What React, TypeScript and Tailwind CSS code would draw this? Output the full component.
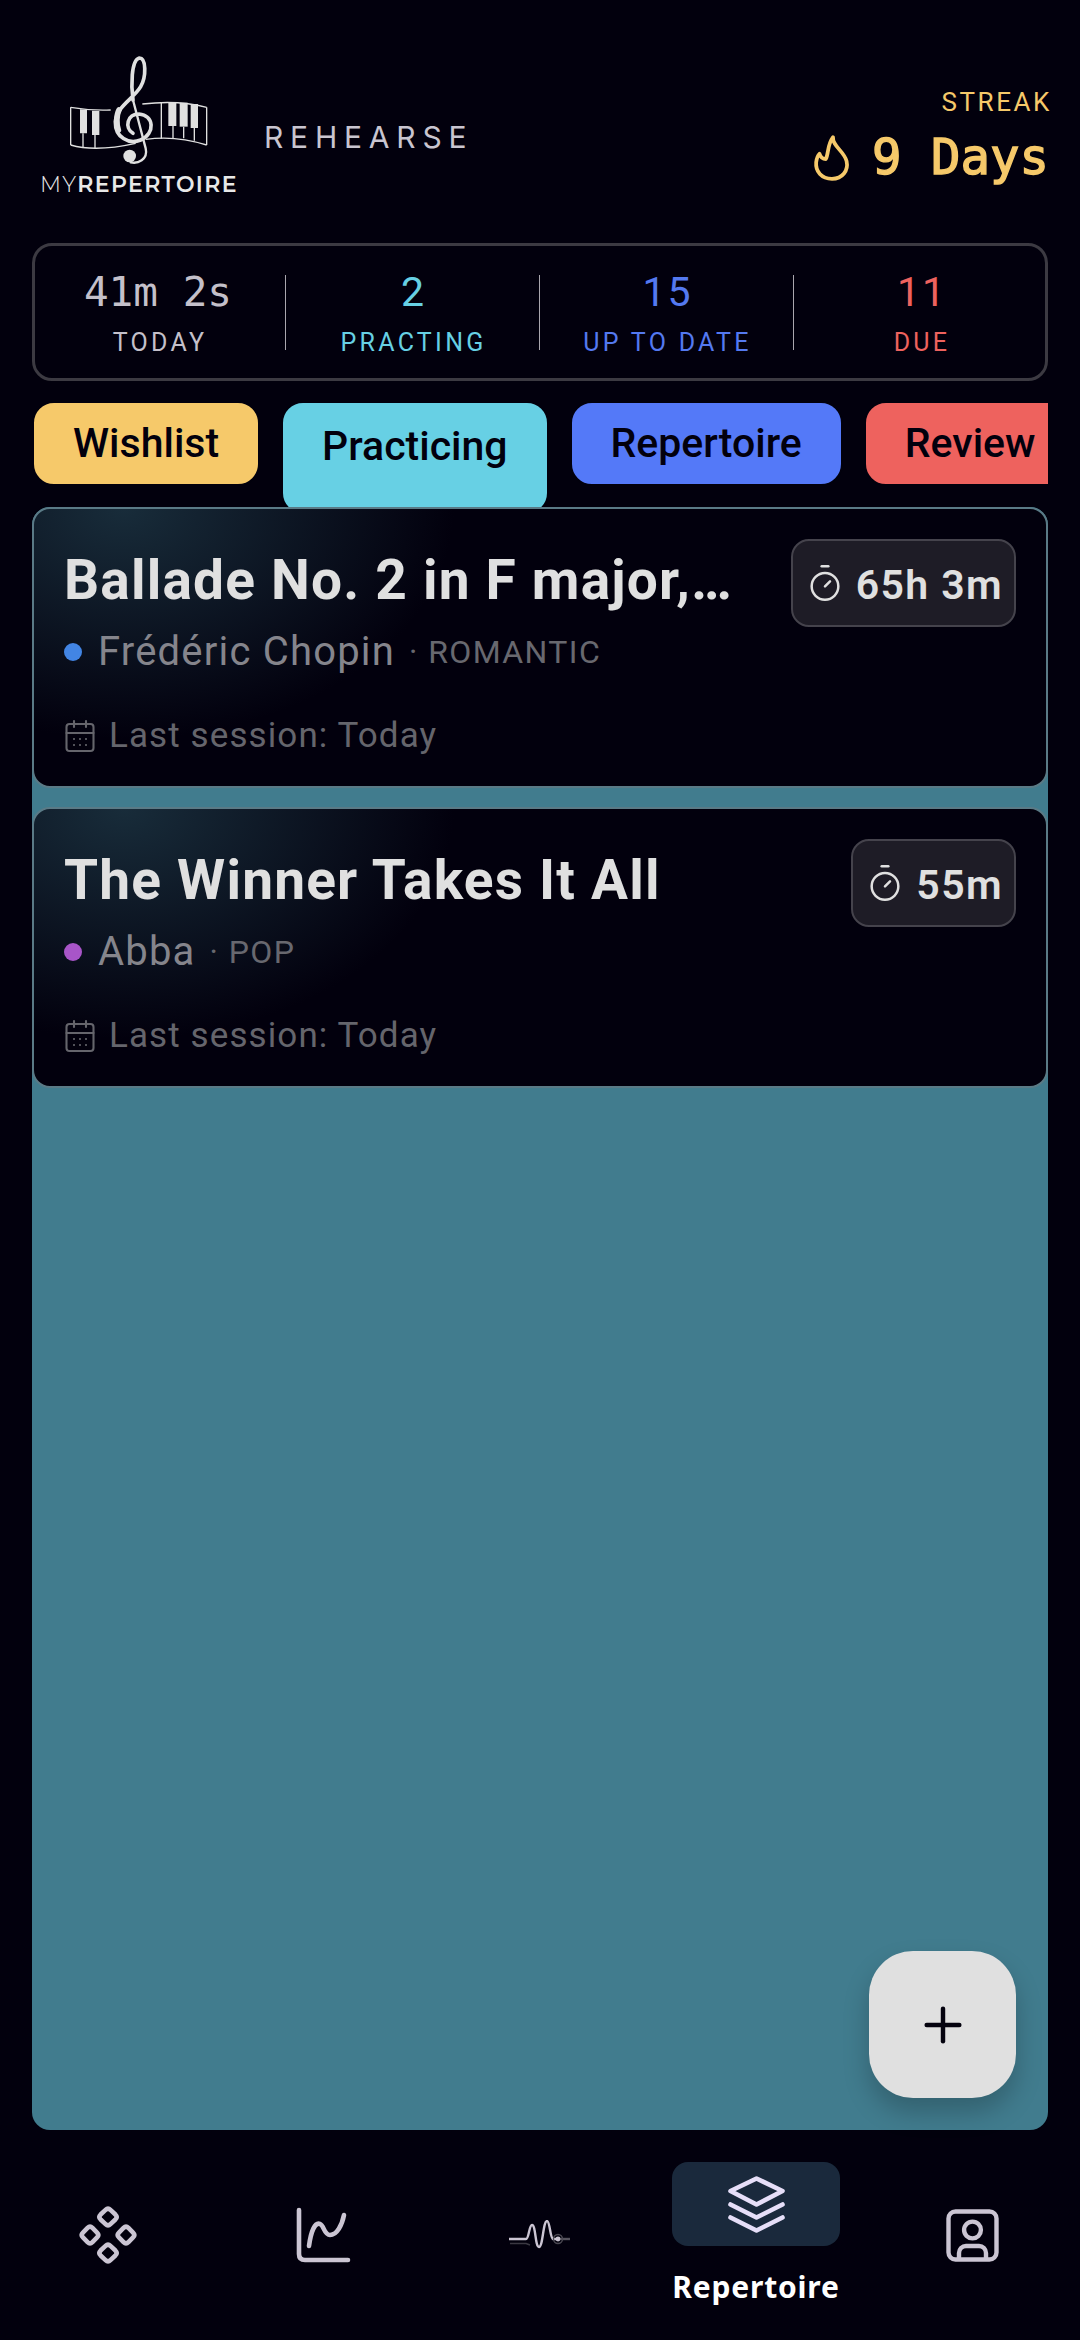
import { CalendarDays, Timer, Plus } from "lucide-react";

const roboto = "font-['Roboto',sans-serif]";

function Logo() {
  return (
    <div className="flex w-[200px] flex-col items-center">
      <svg viewBox="30 15 600 345" width={200} height={115} fill="none" stroke="#e0e0e0">
        <g strokeWidth={4}>
          <path d="M125 172 C160 178 200 182 245 180" />
          <path d="M125 172 V285" />
          <path d="M125 285 C170 298 230 300 320 280" />
          <path d="M340 162 C400 155 470 155 533 172" />
          <path d="M533 172 V285" />
          <path d="M350 268 C420 258 480 268 533 285" />
          <path d="M162 250 V292 M198 255 V296 M397 157 V266 M432 228 V264 M464 230 V265 M496 233 V272" />
        </g>
        <g fill="#e0e0e0" stroke="none">
          <path d="M153 178 L174 180 V250 H153 Z" />
          <path d="M189 182 L211 183 V255 H189 Z" />
          <path d="M418 157 H442 V228 H418 Z" />
          <path d="M452 158 H476 V230 H452 Z" />
          <path d="M485 162 H507 V234 H485 Z" />
        </g>
        <g strokeLinecap="round">
          <path d="M312 150 C306 110 306 30 331 24 C352 24 352 80 335 110 C315 145 262 170 259 215 C258 262 300 285 335 270 C380 250 375 195 330 192 C295 192 285 232 312 250" strokeWidth={11} fill="none" />
          <path d="M270 180 C262 195 262 225 268 240" strokeWidth={17} />
          <path d="M312 150 L350 295 C358 330 325 342 305 337" strokeWidth={7} />
          <circle cx="302" cy="318" r="19" fill="#e0e0e0" stroke="none" />
        </g>
      </svg>
      <div className="mt-[3px] font-['Montserrat','Inter',sans-serif] text-[22px] leading-[24px] tracking-[1.4px] whitespace-nowrap text-[#e8e8e8]">
        <span className="font-light">MY</span>
        <span className="font-semibold">REPERTOIRE</span>
      </div>
    </div>
  );
}

function Flame() {
  return (
    <svg viewBox="0 0 24 24" width={50} height={50} fill="none" stroke="#f6c96a" strokeWidth={1.8} strokeLinejoin="round">
      <path d="M12.5 2 C12 6 18 9 19 13.5 C20 18 17 22 12 22 C7 22 4 18.5 4.4 14 C4.6 12.5 5 11 6 10 C6.5 11.5 7.5 12.5 9 12.5 C10.5 10 9.5 6 12.5 2Z" />
    </svg>
  );
}

function Stat({ value, label, color, mono, width }: { value: string; label: string; color: string; mono?: boolean; width: string }) {
  return (
    <div className={`flex flex-col items-center pt-[2px] ${width}`}>
      <div className={`text-[41px] leading-[48px] ${color} ${mono ? "-ml-[4px] font-['DejaVu_Sans_Mono',monospace] font-normal" : `${roboto} font-normal tracking-[2px]`}`}>
        {value}
      </div>
      <div className={`mt-[12px] ${roboto} text-[25px] leading-[30px] tracking-[3.3px] ${color}`}>{label}</div>
    </div>
  );
}

function Tab({ label, bg, active }: { label: string; bg: string; active?: boolean }) {
  return (
    <div
      className={`flex shrink-0 justify-center rounded-[22px] border-2 border-[#02000d] px-[39px] ${bg} ${roboto} text-[41px] font-medium text-[#02000d] ${
        active ? "h-[114px] pt-[18px]" : "h-[85px] pt-[15px]"
      }`}
    >
      <span className="leading-[50px]">{label}</span>
    </div>
  );
}

function Card({ title, artist, dot, tag, time }: { title: string; artist: string; dot: string; tag: string; time: string }) {
  return (
    <div className="relative h-[281px] rounded-[18px] border-2 border-[#5a7a86] bg-[#02000d] bg-[radial-gradient(ellipse_330px_230px_at_90px_0px,#182c3a_0%,#02000d_100%)] px-[30px] pt-[41px]">
      <div className={`${roboto} text-[55px] leading-[60px] font-bold tracking-[1.2px] whitespace-nowrap text-[#e0e0e0]`}>{title}</div>
      <div className="mt-[16px] flex items-center">
        <div className={`h-[18px] w-[18px] rounded-full ${dot}`} />
        <span className={`ml-[16px] ${roboto} text-[40px] leading-[52px] tracking-[1.2px] text-[#85858c]`}>{artist}</span>
        <span className={`ml-[14px] ${roboto} text-[32px] tracking-[1.4px] text-[#68686f]`}>· {tag}</span>
      </div>
      <div className="mt-[36px] flex items-center">
        <CalendarDays size={36} strokeWidth={1.4} className="-ml-[2px] text-[#65656c]" />
        <span className={`ml-[11px] ${roboto} text-[35px] leading-[44px] tracking-[1.1px] text-[#65656c]`}>Last session: Today</span>
      </div>
      <div className="absolute top-[30px] right-[30px] flex h-[88px] items-center rounded-[18px] border-2 border-[#45434c] bg-[#1e1c26] pr-[11px] pl-[12px]">
        <Timer size={40} strokeWidth={1.5} className="text-[#e0e0e0]" />
        <span className={`mt-[5px] ml-[11px] ${roboto} text-[41px] font-semibold tracking-[1.4px] text-[#e0e0e0]`}>{time}</span>
      </div>
    </div>
  );
}

function NavCell({ children }: { children: React.ReactNode }) {
  return <div className="flex items-center justify-center">{children}</div>;
}

const iconStroke = "#cbc5d3";

export default function App() {
  return (
    <div className="flex h-[2340px] w-[1080px] flex-col overflow-hidden bg-[#02000d]">
      <header className="flex h-[243px] shrink-0 justify-between pt-[55px] pr-[31px] pl-[39px]">
        <div className="flex">
          <Logo />
          <div className="mt-[63px] ml-[25px] font-['Inter',sans-serif] text-[30px] leading-[38px] tracking-[6.8px] text-[#c9c5d0]">REHEARSE</div>
        </div>
        <div className="flex flex-col items-end pt-[32px]">
          <div className={`-mr-[3px] ${roboto} text-[26px] leading-[30px] tracking-[2.6px] text-[#f6c96a]`}>STREAK</div>
          <div className="mt-[11px] flex items-center">
            <Flame />
            <span className="ml-[15px] font-['DejaVu_Sans_Mono',monospace] text-[49px] leading-[60px] font-normal text-[#f6c96a] [-webkit-text-stroke:1.4px_#f6c96a]">9 Days</span>
          </div>
        </div>
      </header>

      <div className="mx-[32px] flex h-[138px] shrink-0 items-center rounded-[20px] border-[3px] border-[#3c3a42]">
        <Stat value="41m 2s" label="TODAY" color="text-[#c4c0ca]" mono width="w-[250px]" />
        <div className="h-[75px] w-px shrink-0 bg-[#a9a6ad]" />
        <Stat value="2" label="PRACTING" color="text-[#67d0e4]" width="w-[253px] pl-[2px]" />
        <div className="h-[75px] w-px shrink-0 bg-[#a9a6ad]" />
        <Stat value="15" label="UP TO DATE" color="text-[#5479f0]" width="w-[253px] pl-[2px]" />
        <div className="h-[75px] w-px shrink-0 bg-[#a9a6ad]" />
        <Stat value="11" label="DUE" color="text-[#ee625e]" width="flex-1 pl-[5px]" />
      </div>

      <div className="mx-[32px] mt-[20px] flex h-[106px] shrink-0 gap-[21px] overflow-hidden">
        <Tab label="Wishlist" bg="bg-[#f6c96a]" />
        <Tab label="Practicing" bg="bg-[#67d0e4]" active />
        <Tab label="Repertoire" bg="bg-[#5479f8]" />
        <Tab label="Review" bg="bg-[#ee625e]" />
      </div>

      <main className="relative mx-[32px] flex flex-1 flex-col gap-[19px] rounded-[18px] bg-[#417c8e]">
        <Card title="Ballade No. 2 in F major,…" artist="Frédéric Chopin" dot="bg-[#4285e4]" tag="ROMANTIC" time="65h 3m" />
        <Card title="The Winner Takes It All" artist="Abba" dot="bg-[#a855c8]" tag="POP" time="55m" />
        <div className="absolute right-[32px] bottom-[32px] flex h-[147px] w-[147px] items-center justify-center rounded-[44px] bg-[#e0e0e0] shadow-[0_14px_26px_rgba(0,0,0,0.22)]">
          <Plus size={56} strokeWidth={1.9} className="text-[#05030f]" />
        </div>
      </main>

      <nav className="grid h-[210px] shrink-0 grid-cols-5 items-center">
        <NavCell>
          <svg viewBox="0 0 170 170" width={60} height={60} fill="none" stroke={iconStroke} strokeWidth={13} strokeLinejoin="round">
            <path d="M78 14 Q85 7 92 14 L106 27 Q113 34 106 41 L92 54 Q85 61 78 54 L64 41 Q57 34 64 27 Z" />
            <path d="M27 65 Q34 58 41 65 L54 78 Q61 85 54 92 L41 105 Q34 112 27 105 L14 92 Q7 85 14 78 Z" />
            <path d="M129 65 Q136 58 143 65 L156 78 Q163 85 156 92 L143 105 Q136 112 129 105 L116 92 Q109 85 116 78 Z" />
            <path d="M78 116 Q85 109 92 116 L106 129 Q113 136 106 143 L92 156 Q85 163 78 156 L64 143 Q57 136 64 129 Z" />
          </svg>
        </NavCell>
        <NavCell>
          <svg viewBox="0 0 56 56" width={56} height={56} fill="none" stroke={iconStroke} strokeWidth={4.6} strokeLinecap="round" strokeLinejoin="round">
            <path d="M3 3 V47 Q3 53 9 53 H52" />
            <path d="M13 39 C15 24 19 15 24 17 C28 18 28 28 34 28 C41 28 46 18 48 8" />
          </svg>
        </NavCell>
        <NavCell>
          <svg viewBox="0 0 62 30" width={62} height={30} fill="none" stroke={iconStroke} strokeWidth={2.4} strokeLinejoin="round">
            <path d="M0 19 H17 C20 19 20 5 23 5 C27 5 26 27 30 27 C34 27 34 1 38 1 C41 1 41 18 44 19 H49" />
            <path d="M49 19 H61" stroke="#55525c" />
            <path d="M1 23.5 H17 L21 25" stroke="#3a3842" strokeWidth={1.6} />
            <circle cx="49" cy="19" r="2.4" fill={iconStroke} stroke="none" />
            <circle cx="49" cy="19" r="4.5" stroke="#4b4852" strokeWidth={1.4} />
          </svg>
        </NavCell>
        <div className="flex flex-col items-center pb-[3px]">
          <div className="flex h-[84px] w-[168px] items-center justify-center rounded-[16px] bg-[#1a293c]">
            <svg viewBox="0 0 57 57" width={57} height={57} fill="none" stroke="#e6def8" strokeWidth={4.6} strokeLinecap="round" strokeLinejoin="round">
              <path d="M28.5 2.5 L54.5 15 L28.5 28.5 L2.5 15 Z" />
              <path d="M2.5 28.5 L28.5 41.5 L54.5 28.5" />
              <path d="M2.5 41.5 L28.5 54.5 L54.5 41.5" />
            </svg>
          </div>
          <span className="mt-[23px] font-['Noto_Sans',sans-serif] text-[30px] leading-[36px] font-bold tracking-[0.8px] text-white">Repertoire</span>
        </div>
        <NavCell>
          <svg viewBox="0 0 53 53" width={53} height={53} fill="none" stroke={iconStroke} strokeWidth={4.4}>
            <rect x="2.5" y="2.5" width="48" height="48" rx="7" />
            <circle cx="26.5" cy="21" r="8.4" />
            <path d="M13 50 V44 A7 7 0 0 1 20 37 H33 A7 7 0 0 1 40 44 V50" />
          </svg>
        </NavCell>
      </nav>
    </div>
  );
}
